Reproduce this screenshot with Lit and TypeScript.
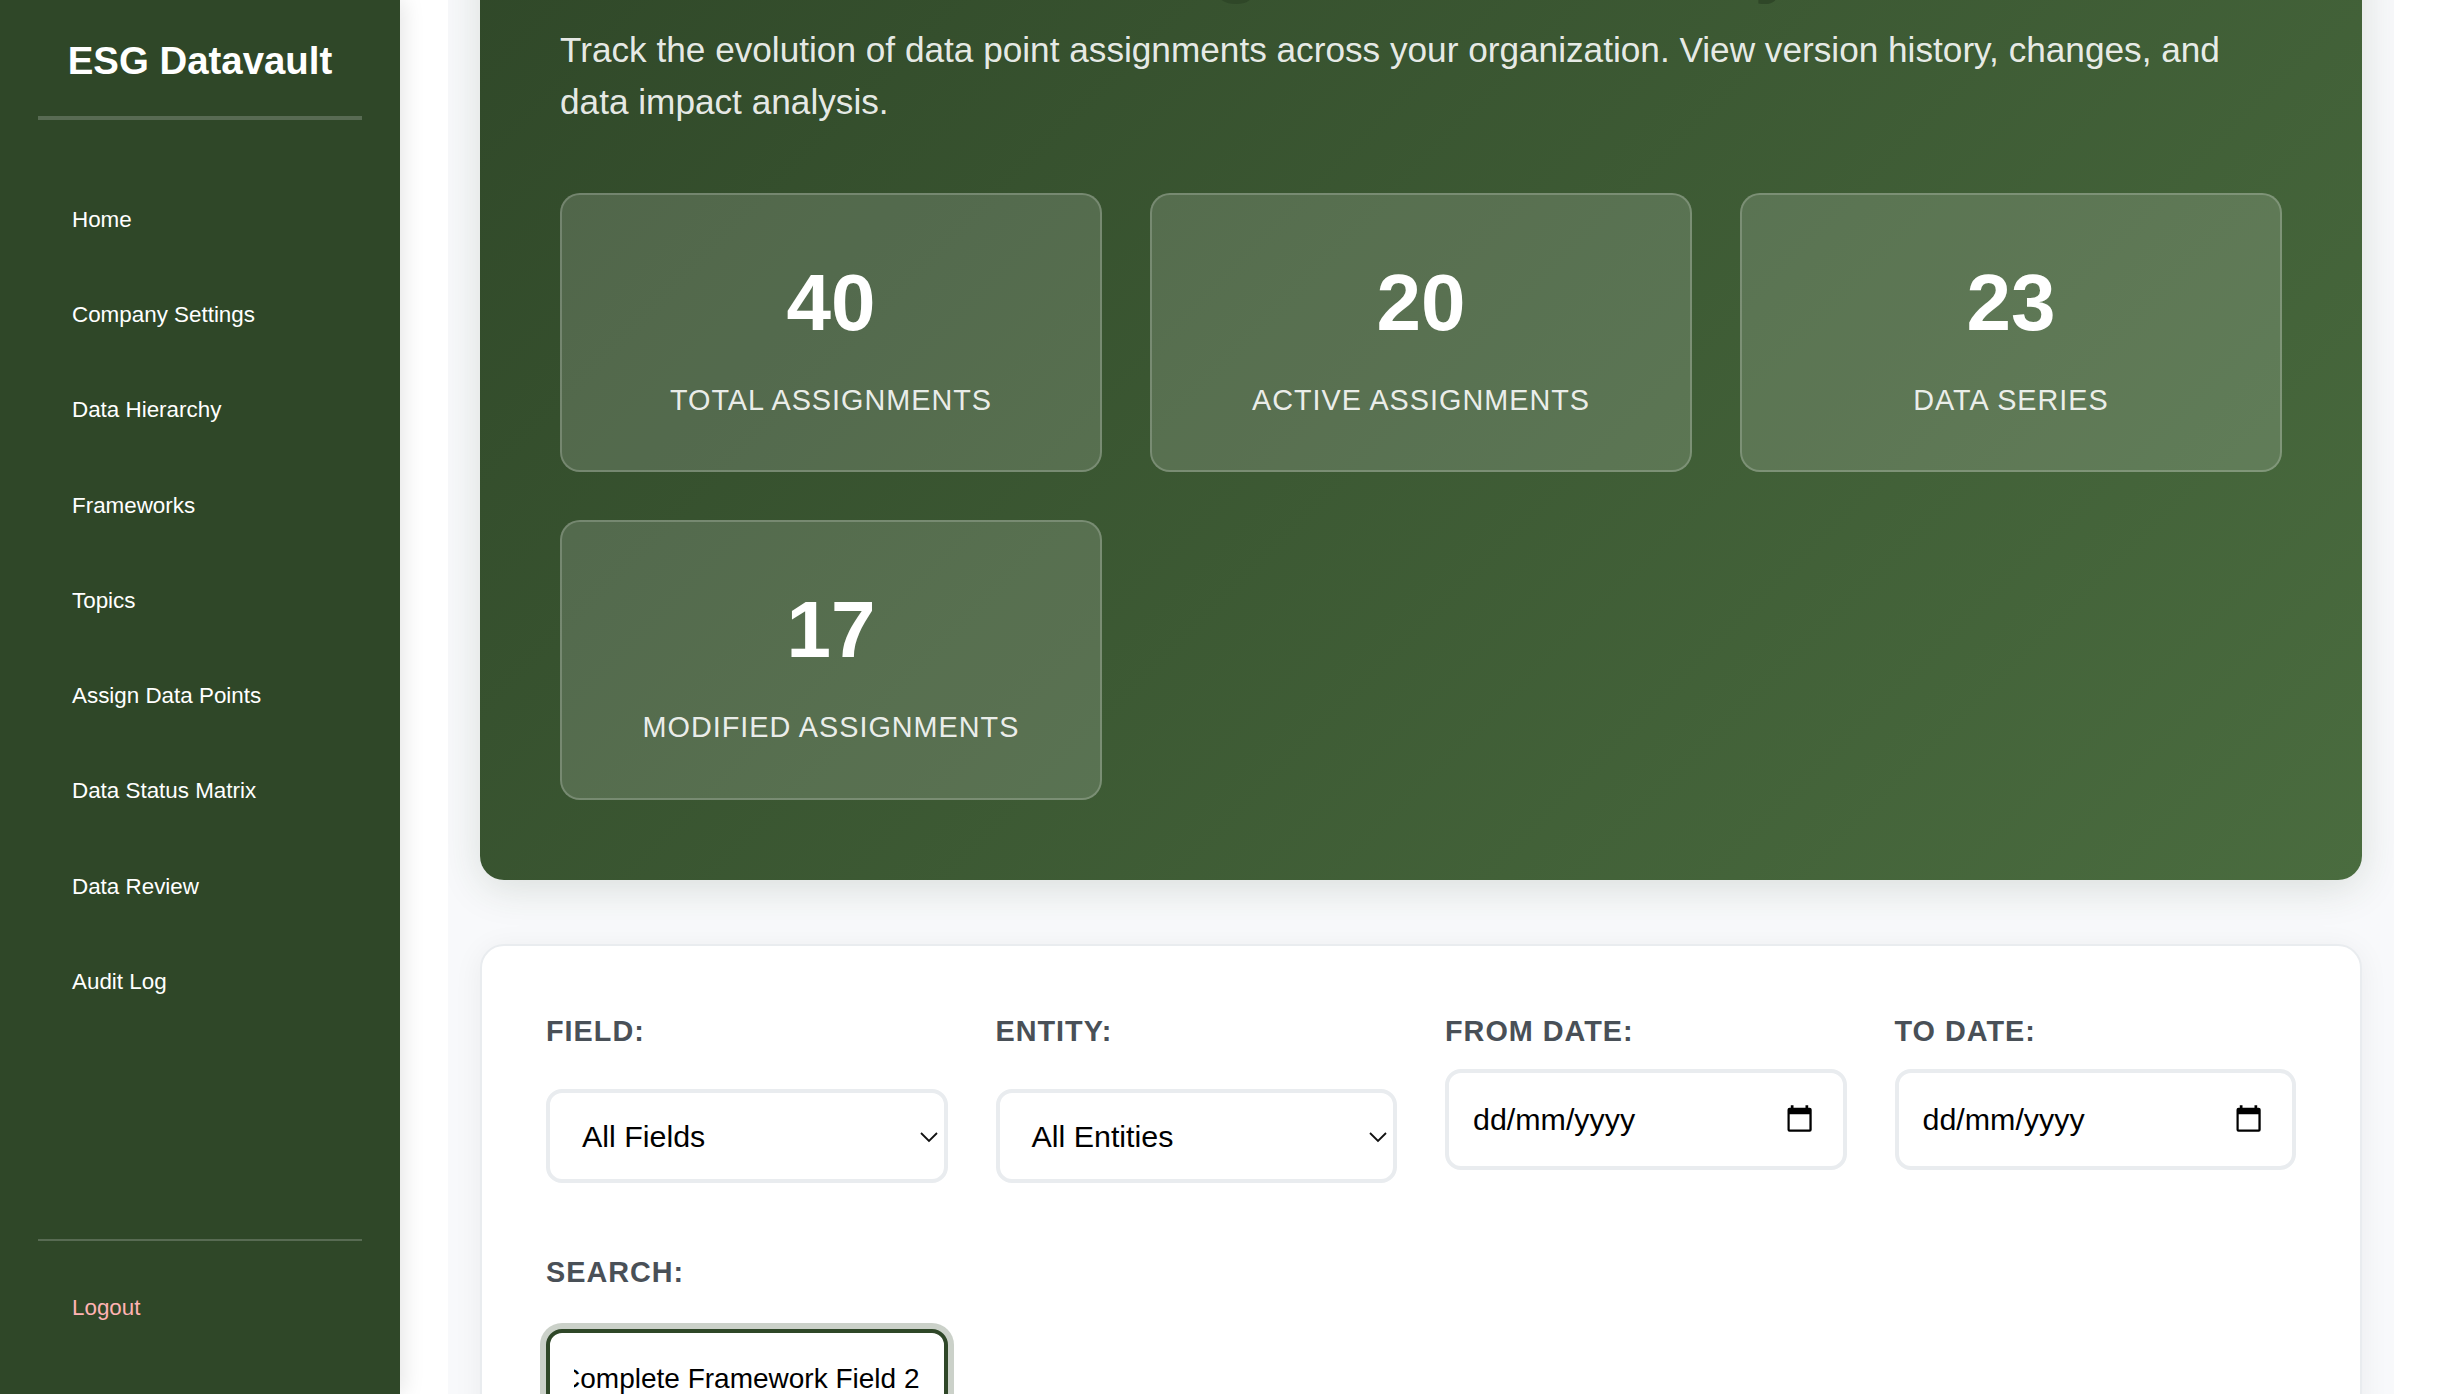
import { LitElement, html, css, svg } from "lit";
import { customElement } from "lit/decorators.js";

const NAV = [
  "Home",
  "Company Settings",
  "Data Hierarchy",
  "Frameworks",
  "Topics",
  "Assign Data Points",
  "Data Status Matrix",
  "Data Review",
  "Audit Log",
];

const STATS = [
  { value: 40, label: "Total Assignments" },
  { value: 20, label: "Active Assignments" },
  { value: 23, label: "Data Series" },
  { value: 17, label: "Modified Assignments" },
];

const chevron = html`<svg class="chevron" viewBox="0 0 18 12" width="18" height="12">
  ${svg`<path d="M1 2 L9 10 L17 2" fill="none" stroke="#111" stroke-width="1.8"/>`}
</svg>`;

const calendar = html`<svg class="calendar" viewBox="0 0 25 28" width="25" height="28">
  ${svg`<path fill="#000" fill-rule="evenodd" d="M3.800 0.300h2.700v2.500h12V0.300h2.700v2.500h1.500A2 2 0 0 1 24.700 4.800v20a2 2 0 0 1-2 2h-20.200a2 2 0 0 1-2-2v-20a2 2 0 0 1 2-2h1.300zM2.700 9.300v15.200h19.700V9.300z"/>`}
</svg>`;

@customElement("app-root")
export class AppRoot extends LitElement {
  static styles = css`
    :host {
      display: block;
      height: 1394px;
      overflow: hidden;
      background: #fff;
      font-family: "Liberation Sans", Arial, sans-serif;
    }
    * {
      box-sizing: border-box;
      margin: 0;
    }
    .layout {
      display: flex;
      height: 1394px;
    }
    .sidebar {
      width: 400px;
      flex: none;
      display: flex;
      flex-direction: column;
      padding: 0 38px;
      background: #2f4728;
      color: #fff;
      box-shadow: 4px 0 20px rgba(0, 0, 0, 0.1);
    }
    .brand {
      height: 120px;
      padding-top: 39px;
      border-bottom: 4px solid rgba(255, 255, 255, 0.2);
      font-size: 38.4px;
      line-height: 44px;
      font-weight: 700;
      text-align: center;
      white-space: nowrap;
    }
    .nav {
      flex: 1;
      padding-top: 52px;
    }
    .link {
      display: flex;
      align-items: center;
      height: 95.3px;
      padding-left: 34px;
      font-size: 22.4px;
    }
    .foot {
      height: 155px;
      border-top: 2px solid rgba(255, 255, 255, 0.2);
      padding-top: 19px;
    }
    .logout {
      color: #ffb3b3;
    }
    .main {
      width: 1946px;
      flex: none;
      margin-left: 48px;
      padding: 0 32px;
      background: #f8f9fb;
      overflow: hidden;
    }
    .hero {
      height: 1012px;
      margin-top: -132px;
      padding: 46px 80px 80px;
      border-radius: 24px;
      background: linear-gradient(135deg, #2f4728 0%, #4a6c3f 100%);
      box-shadow: 0 8px 40px rgba(47, 71, 40, 0.15);
      display: flex;
      flex-direction: column;
    }
    .title {
      font-size: 80px;
      line-height: 92px;
      color: #2f4728;
      text-align: center;
    }
    .lead {
      margin-top: 18px;
      font-size: 35.2px;
      line-height: 52px;
      color: rgba(255, 255, 255, 0.9);
    }
    .stats {
      margin-top: auto;
      display: grid;
      grid-template-columns: repeat(3, minmax(0, 1fr));
      gap: 48px;
    }
    .stat {
      height: 279.6px;
      border: 2px solid rgba(255, 255, 255, 0.2);
      border-radius: 20px;
      background: rgba(255, 255, 255, 0.15);
      text-align: center;
      padding-top: 62px;
    }
    .value {
      font-size: 80px;
      line-height: 92px;
      font-weight: 700;
      color: #fff;
    }
    .label {
      margin-top: 34px;
      font-size: 28.8px;
      line-height: 34px;
      letter-spacing: 1px;
      text-transform: uppercase;
      color: rgba(255, 255, 255, 0.9);
    }
    .filters {
      margin-top: 64px;
      height: 600px;
      padding: 64px;
      border: 2px solid #e9ecef;
      border-radius: 24px;
      background: #fff;
      box-shadow: 0 4px 30px rgba(0, 0, 0, 0.06);
      display: grid;
      grid-template-columns: repeat(4, minmax(0, 1fr));
      grid-auto-rows: 193px;
      column-gap: 48px;
      row-gap: 48px;
      align-content: start;
    }
    .name {
      display: block;
      font-size: 28.8px;
      line-height: 42px;
      font-weight: 700;
      letter-spacing: 1px;
      text-transform: uppercase;
      color: #495057;
    }
    .box {
      display: flex;
      align-items: center;
      justify-content: space-between;
      border: 4px solid #e9ecef;
      border-radius: 16px;
      background: #fff;
      color: #000;
      font-size: 30.4px;
      white-space: nowrap;
    }
    .select {
      margin-top: 37px;
      height: 94px;
      padding: 0 6px 0 32px;
    }
    .date {
      margin-top: 17px;
      height: 101px;
      padding: 0 31px 0 24px;
    }
    .search {
      margin-top: 36px;
      height: 100px;
      padding: 0 24px;
      border-color: #2f4728;
      box-shadow: 0 0 0 6px rgba(47, 71, 40, 0.25);
      font-size: 28px;
    }
    .query {
      flex: 1;
      min-width: 0;
      display: flex;
      justify-content: flex-end;
      overflow: hidden;
    }
    .chevron {
      margin-top: 1px;
      flex: none;
    }
    .calendar {
      margin-top: -1px;
      flex: none;
    }
  `;

  render() {
    return html`
      <div class="layout">
        <aside class="sidebar">
          <div class="brand">ESG Datavault</div>
          <nav class="nav">${NAV.map((n) => html`<div class="link">${n}</div>`)}</nav>
          <div class="foot"><div class="link logout">Logout</div></div>
        </aside>
        <main class="main">
          <section class="hero">
            <h1 class="title">Assignment History</h1>
            <p class="lead">
              Track the evolution of data point assignments across your organization. View version
              history, changes, and data impact analysis.
            </p>
            <div class="stats">
              ${STATS.map(
                (s) => html`<div class="stat">
                  <div class="value">${s.value}</div>
                  <div class="label">${s.label}</div>
                </div>`
              )}
            </div>
          </section>
          <section class="filters">
            <div>
              <span class="name">Field:</span>
              <div class="box select"><span>All Fields</span>${chevron}</div>
            </div>
            <div>
              <span class="name">Entity:</span>
              <div class="box select"><span>All Entities</span>${chevron}</div>
            </div>
            <div>
              <span class="name">From Date:</span>
              <div class="box date"><span>dd/mm/yyyy</span>${calendar}</div>
            </div>
            <div>
              <span class="name">To Date:</span>
              <div class="box date"><span>dd/mm/yyyy</span>${calendar}</div>
            </div>
            <div>
              <span class="name">Search:</span>
              <div class="box search">
                <div class="query"><span>Complete Framework Field 2</span></div>
              </div>
            </div>
          </section>
        </main>
      </div>
    `;
  }
}
